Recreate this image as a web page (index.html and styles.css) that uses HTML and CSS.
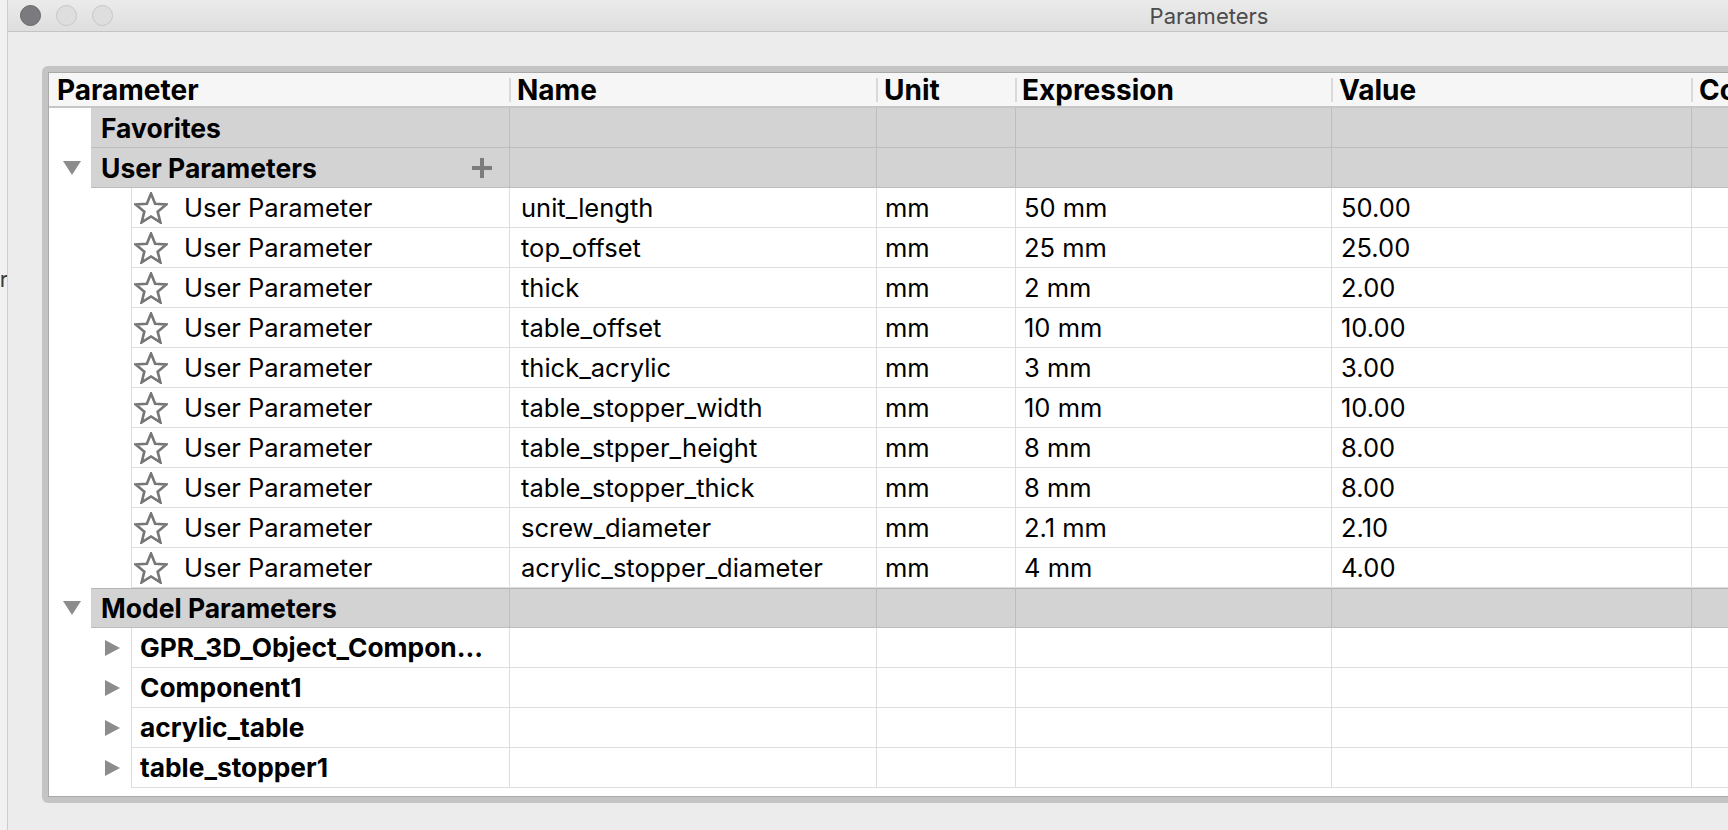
FILE: index.html
```html
<!DOCTYPE html>
<html>
<head>
<meta charset="utf-8">
<title>Parameters</title>
<link rel="stylesheet" href="styles.css">
</head>
<body>
<div class="desk">
  <span class="behind">er</span>
  <div class="window">
    <div class="titlebar">
      <div class="lights">
        <span class="light close"></span>
        <span class="light"></span>
        <span class="light"></span>
      </div>
      <div class="title">Parameters</div>
    </div>
    <div class="content">
      <div class="frame">
        <div class="table">
          <div class="hrow">
            <div class="h">Parameter</div>
            <div class="h sep">Name</div>
            <div class="h sep">Unit</div>
            <div class="h sep hx">Expression</div>
            <div class="h sep">Value</div>
            <div class="h sep">Comment</div>
          </div>

          <div class="row group">
            <div class="c1"><span class="lead lead-g"></span><div class="main"><b>Favorites</b></div></div>
            <div class="c"></div><div class="c"></div><div class="c"></div><div class="c"></div><div class="c"></div>
          </div>

          <div class="row group">
            <div class="c1"><span class="lead lead-g"><svg class="tri-d" viewBox="0 0 18 14"><polygon points="0,0 18,0 9,14"/></svg></span><div class="main"><b>User Parameters</b><svg class="plus" viewBox="0 0 20 20"><rect x="8" y="0" width="4" height="20"/><rect x="0" y="8" width="20" height="4"/></svg></div></div>
            <div class="c"></div><div class="c"></div><div class="c"></div><div class="c"></div><div class="c"></div>
          </div>

          <div class="row data">
            <div class="c1"><span class="lead lead-d"></span><div class="main"><svg class="star" viewBox="0 0 34 32"><polygon points="17,1.5 21.11,11.84 32.22,12.56 23.66,19.66 26.4,30.44 17,24.5 7.6,30.44 10.34,19.66 1.78,12.56 12.89,11.84"/></svg><span>User Parameter</span></div></div>
            <div class="c cn">unit_length</div><div class="c cu">mm</div><div class="c ce">50 mm</div><div class="c cv">50.00</div><div class="c"></div>
          </div>
          <div class="row data">
            <div class="c1"><span class="lead lead-d"></span><div class="main"><svg class="star" viewBox="0 0 34 32"><polygon points="17,1.5 21.11,11.84 32.22,12.56 23.66,19.66 26.4,30.44 17,24.5 7.6,30.44 10.34,19.66 1.78,12.56 12.89,11.84"/></svg><span>User Parameter</span></div></div>
            <div class="c cn">top_offset</div><div class="c cu">mm</div><div class="c ce">25 mm</div><div class="c cv">25.00</div><div class="c"></div>
          </div>
          <div class="row data">
            <div class="c1"><span class="lead lead-d"></span><div class="main"><svg class="star" viewBox="0 0 34 32"><polygon points="17,1.5 21.11,11.84 32.22,12.56 23.66,19.66 26.4,30.44 17,24.5 7.6,30.44 10.34,19.66 1.78,12.56 12.89,11.84"/></svg><span>User Parameter</span></div></div>
            <div class="c cn">thick</div><div class="c cu">mm</div><div class="c ce">2 mm</div><div class="c cv">2.00</div><div class="c"></div>
          </div>
          <div class="row data">
            <div class="c1"><span class="lead lead-d"></span><div class="main"><svg class="star" viewBox="0 0 34 32"><polygon points="17,1.5 21.11,11.84 32.22,12.56 23.66,19.66 26.4,30.44 17,24.5 7.6,30.44 10.34,19.66 1.78,12.56 12.89,11.84"/></svg><span>User Parameter</span></div></div>
            <div class="c cn">table_offset</div><div class="c cu">mm</div><div class="c ce">10 mm</div><div class="c cv">10.00</div><div class="c"></div>
          </div>
          <div class="row data">
            <div class="c1"><span class="lead lead-d"></span><div class="main"><svg class="star" viewBox="0 0 34 32"><polygon points="17,1.5 21.11,11.84 32.22,12.56 23.66,19.66 26.4,30.44 17,24.5 7.6,30.44 10.34,19.66 1.78,12.56 12.89,11.84"/></svg><span>User Parameter</span></div></div>
            <div class="c cn">thick_acrylic</div><div class="c cu">mm</div><div class="c ce">3 mm</div><div class="c cv">3.00</div><div class="c"></div>
          </div>
          <div class="row data">
            <div class="c1"><span class="lead lead-d"></span><div class="main"><svg class="star" viewBox="0 0 34 32"><polygon points="17,1.5 21.11,11.84 32.22,12.56 23.66,19.66 26.4,30.44 17,24.5 7.6,30.44 10.34,19.66 1.78,12.56 12.89,11.84"/></svg><span>User Parameter</span></div></div>
            <div class="c cn">table_stopper_width</div><div class="c cu">mm</div><div class="c ce">10 mm</div><div class="c cv">10.00</div><div class="c"></div>
          </div>
          <div class="row data">
            <div class="c1"><span class="lead lead-d"></span><div class="main"><svg class="star" viewBox="0 0 34 32"><polygon points="17,1.5 21.11,11.84 32.22,12.56 23.66,19.66 26.4,30.44 17,24.5 7.6,30.44 10.34,19.66 1.78,12.56 12.89,11.84"/></svg><span>User Parameter</span></div></div>
            <div class="c cn">table_stpper_height</div><div class="c cu">mm</div><div class="c ce">8 mm</div><div class="c cv">8.00</div><div class="c"></div>
          </div>
          <div class="row data">
            <div class="c1"><span class="lead lead-d"></span><div class="main"><svg class="star" viewBox="0 0 34 32"><polygon points="17,1.5 21.11,11.84 32.22,12.56 23.66,19.66 26.4,30.44 17,24.5 7.6,30.44 10.34,19.66 1.78,12.56 12.89,11.84"/></svg><span>User Parameter</span></div></div>
            <div class="c cn">table_stopper_thick</div><div class="c cu">mm</div><div class="c ce">8 mm</div><div class="c cv">8.00</div><div class="c"></div>
          </div>
          <div class="row data">
            <div class="c1"><span class="lead lead-d"></span><div class="main"><svg class="star" viewBox="0 0 34 32"><polygon points="17,1.5 21.11,11.84 32.22,12.56 23.66,19.66 26.4,30.44 17,24.5 7.6,30.44 10.34,19.66 1.78,12.56 12.89,11.84"/></svg><span>User Parameter</span></div></div>
            <div class="c cn">screw_diameter</div><div class="c cu">mm</div><div class="c ce">2.1 mm</div><div class="c cv">2.10</div><div class="c"></div>
          </div>
          <div class="row data">
            <div class="c1"><span class="lead lead-d"></span><div class="main"><svg class="star" viewBox="0 0 34 32"><polygon points="17,1.5 21.11,11.84 32.22,12.56 23.66,19.66 26.4,30.44 17,24.5 7.6,30.44 10.34,19.66 1.78,12.56 12.89,11.84"/></svg><span>User Parameter</span></div></div>
            <div class="c cn">acrylic_stopper_diameter</div><div class="c cu">mm</div><div class="c ce">4 mm</div><div class="c cv">4.00</div><div class="c"></div>
          </div>

          <div class="row group gtop">
            <div class="c1"><span class="lead lead-g"><svg class="tri-d" viewBox="0 0 18 14"><polygon points="0,0 18,0 9,14"/></svg></span><div class="main"><b>Model Parameters</b></div></div>
            <div class="c"></div><div class="c"></div><div class="c"></div><div class="c"></div><div class="c"></div>
          </div>

          <div class="row data child">
            <div class="c1"><span class="lead lead-d"><svg class="tri-r" viewBox="0 0 15 16"><polygon points="0,0 15,8 0,16"/></svg></span><div class="main"><b>GPR_3D_Object_Compon...</b></div></div>
            <div class="c"></div><div class="c"></div><div class="c"></div><div class="c"></div><div class="c"></div>
          </div>
          <div class="row data child">
            <div class="c1"><span class="lead lead-d"><svg class="tri-r" viewBox="0 0 15 16"><polygon points="0,0 15,8 0,16"/></svg></span><div class="main"><b>Component1</b></div></div>
            <div class="c"></div><div class="c"></div><div class="c"></div><div class="c"></div><div class="c"></div>
          </div>
          <div class="row data child">
            <div class="c1"><span class="lead lead-d"><svg class="tri-r" viewBox="0 0 15 16"><polygon points="0,0 15,8 0,16"/></svg></span><div class="main"><b>acrylic_table</b></div></div>
            <div class="c"></div><div class="c"></div><div class="c"></div><div class="c"></div><div class="c"></div>
          </div>
          <div class="row data child">
            <div class="c1"><span class="lead lead-d"><svg class="tri-r" viewBox="0 0 15 16"><polygon points="0,0 15,8 0,16"/></svg></span><div class="main"><b>table_stopper1</b></div></div>
            <div class="c"></div><div class="c"></div><div class="c"></div><div class="c"></div><div class="c"></div>
          </div>
        </div>
      </div>
    </div>
  </div>
</div>
</body>
</html>
```

FILE: styles.css
```css
* { box-sizing: border-box; }
html, body { margin: 0; padding: 0; }
body {
  width: 1728px;
  height: 830px;
  overflow: hidden;
  background: #f1f1f1;
  font-family: Inter, "Liberation Sans", sans-serif;
  color: #000;
}
.desk {
  position: relative;
  padding-left: 7px;
  height: 830px;
}
.behind {
  position: absolute;
  left: -13px;
  top: 266px;
  font-size: 22px;
  color: #3a3a3a;
}
.window {
  position: relative;
  width: 2398px;
  height: 830px;
  border-left: 1px solid #cdcdcd;
  background: #ececec;
}
.titlebar {
  height: 32px;
  border-bottom: 1px solid #c4c4c4;
  background: linear-gradient(#ebebeb, #dedede);
  display: flex;
  align-items: center;
}
.lights {
  display: flex;
  gap: 15px;
  padding-left: 12px;
}
.light {
  width: 21px;
  height: 21px;
  border-radius: 50%;
  background: #dedede;
  border: 1px solid #c6c6c6;
}
.light.close {
  background: #7b7a7f;
  border-color: #66656a;
}
.title {
  flex: 1;
  text-align: center;
  font-size: 22px;
  color: #4b4b4b;
  margin-right: 100px;
}
.content {
  padding: 34px 0 0 34px;
}
.frame {
  background: #c4c4c4;
  padding: 6px;
  border-radius: 6px;
  height: 737px;
  width: 2300px;
}
.table {
  background: #fff;
  border: 1px solid #a9a9a9;
  height: 100%;
}
.hrow, .row {
  display: grid;
  grid-template-columns: 460px 367px 139px 316px 360px 1fr;
}
.hrow {
  height: 35px;
  background: #f6f6f6;
  border-bottom: 2px solid #c6c6c6;
}
.h {
  font-weight: 700;
  font-size: 28px;
  padding-left: 8px;
  display: flex;
  align-items: center;
  color: #000;
}
.h.sep {
  background: linear-gradient(#d9d9d9, #d9d9d9) left center / 2px 24px no-repeat;
}
.h.hx { padding-left: 7px; }
.row {
  height: 40px;
  font-size: 25.5px;
}
.c1 { display: flex; }
.lead {
  flex: none;
  display: flex;
  align-items: center;
}
.lead-g { width: 42px; }
.lead-d { width: 82px; }
.main {
  flex: 1;
  display: flex;
  align-items: center;
  border-bottom: 1px solid #dedede;
  white-space: nowrap;
}
.c {
  border-left: 1px solid #dedede;
  border-bottom: 1px solid #dedede;
  display: flex;
  align-items: center;
  white-space: nowrap;
}
.data .main { border-left: 1px solid #dedede; }
.group .main, .group .c {
  background: #d3d3d3;
  border-color: #bdbdbd;
}
.group.gtop .main, .group.gtop .c { border-top: 1px solid #b5b5b5; }
.group .main { padding-left: 10px; font-size: 26.5px; }
.group b { font-weight: 700; }
.tri-d {
  width: 18px;
  height: 14px;
  margin-left: 14px;
  fill: #8c8c8c;
}
.plus {
  width: 20px;
  height: 20px;
  margin-left: auto;
  margin-right: 17px;
  fill: #7c7c7c;
}
.star {
  width: 34px;
  height: 32px;
  margin-left: 2px;
  margin-right: 16px;
  fill: none;
  stroke: #777;
  stroke-width: 2.6;
  stroke-linejoin: miter;
}
.cn { padding-left: 11px; }
.cu { padding-left: 8px; }
.ce { padding-left: 8px; }
.cv { padding-left: 9px; }
.child .main { padding-left: 8px; font-size: 26.3px; }
.tri-r {
  width: 15px;
  height: 16px;
  margin-left: 56px;
  fill: #8c8c8c;
}
```
